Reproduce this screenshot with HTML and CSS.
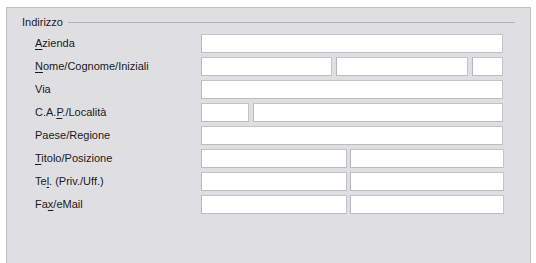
FILE: index.html
```html
<!DOCTYPE html>
<html lang="it">
<head>
<meta charset="utf-8">
<link rel="stylesheet" href="styles.css">
</head>
<body>
<div class="panel">
  <div class="legend"><span class="legend-text">Indirizzo</span><span class="legend-line"></span></div>
  <div class="form">
    <div class="row"><label class="lbl"><u>A</u>zienda</label><div class="fields"><span class="f w302"></span></div></div>
    <div class="row"><label class="lbl"><u>N</u>ome/Cognome/Iniziali</label><div class="fields tight"><span class="f w131"></span><span class="f w132"></span><span class="f w31"></span></div></div>
    <div class="row"><label class="lbl">Via</label><div class="fields"><span class="f w302"></span></div></div>
    <div class="row"><label class="lbl">C.A.<u>P</u>./Località</label><div class="fields tight"><span class="f w48"></span><span class="f w250"></span></div></div>
    <div class="row"><label class="lbl">Paese/Regione</label><div class="fields"><span class="f w302"></span></div></div>
    <div class="row"><label class="lbl"><u>T</u>itolo/Posizione</label><div class="fields narrow"><span class="f w146"></span><span class="f w154"></span></div></div>
    <div class="row"><label class="lbl">Te<u>l</u>. (Priv./Uff.)</label><div class="fields narrow"><span class="f w146"></span><span class="f w154"></span></div></div>
    <div class="row"><label class="lbl">Fa<u>x</u>/eMail</label><div class="fields narrow"><span class="f w146"></span><span class="f w154"></span></div></div>
  </div>
</div>
</body>
</html>
```
FILE: styles.css
```css
html, body {
  margin: 0;
  padding: 0;
  background: #ffffff;
  overflow: hidden;
}
body {
  font-family: "Liberation Sans", Arial, sans-serif;
  font-size: 11px;
  color: #1a1a1a;
}
.panel {
  box-sizing: border-box;
  margin: 7px 0 0 6px;
  width: 525px;
  height: 260px;
  background: #dfdfe3;
  border: 1px solid #c2c2c6;
  border-bottom: none;
  padding: 7px 15px 0 15px;
}
.legend {
  display: flex;
  align-items: center;
  height: 14px;
}
.legend-text {
  line-height: 14px;
}
.legend-line {
  flex: 1;
  height: 1px;
  background: #b4b4b8;
  margin-left: 5px;
}
.form {
  display: flex;
  flex-direction: column;
  gap: 4px;
  margin-top: 5px;
  padding-left: 13px;
}
.row {
  display: flex;
  align-items: center;
  height: 19px;
}
.lbl {
  width: 166px;
  line-height: 19px;
}
.lbl u {
  text-decoration-thickness: 1px;
  text-underline-offset: 2px;
}
.fields {
  display: flex;
  gap: 4px;
}
.fields.narrow {
  gap: 3px;
}
.f {
  display: block;
  box-sizing: border-box;
  height: 19px;
  background: #ffffff;
  border: 1px solid #c4c4c8;
  border-left-color: #b8b8bc;
  border-bottom-color: #bdbdc1;
}
.w302 { width: 302px; }
.w131 { width: 131px; }
.w132 { width: 132px; }
.w31 { width: 31px; }
.w48 { width: 48px; }
.w250 { width: 250px; }
.w146 { width: 146px; }
.w154 { width: 154px; }
```
